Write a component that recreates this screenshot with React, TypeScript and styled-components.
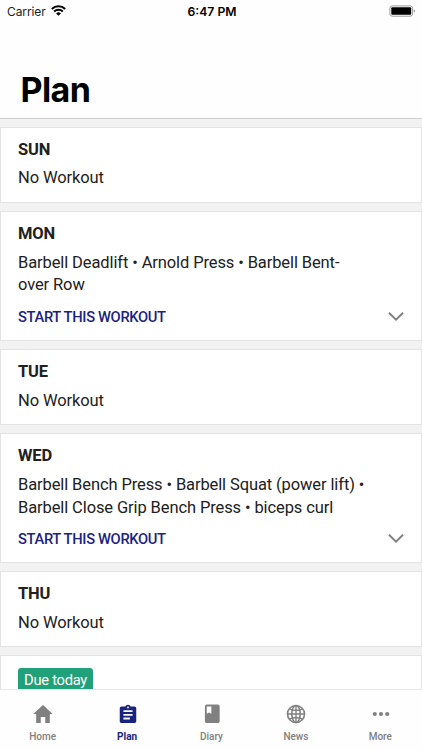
import React from "react";
import styled, { createGlobalStyle, css } from "styled-components";

const GlobalStyle = createGlobalStyle`
  * { box-sizing: border-box; }
  body { margin: 0; background: #fff; overflow: hidden; }
`;

const Screen = styled.div`
  width: 422px;
  height: 750px;
  display: flex;
  flex-direction: column;
  background: #fefefe;
  font-family: Roboto, "Liberation Sans", sans-serif;
  color: #212121;
  overflow: hidden;
`;

const Header = styled.header`
  flex: none;
  height: 119px;
  border-bottom: 1px solid #cfcfcf;
  font-family: Inter, "Liberation Sans", sans-serif;
  color: #000;
`;

const StatusBar = styled.div`
  height: 22px;
  display: grid;
  grid-template-columns: 1fr auto 1fr;
  align-items: center;
  padding: 0 6px 0 7px;
  font-size: 12px;
`;

const Carrier = styled.div`
  display: flex;
  align-items: center;
  gap: 5px;
  color: #222;
  letter-spacing: -0.1px;

  svg {
    margin-top: -2px;
  }
`;

const Clock = styled.div`
  font-weight: 600;
  font-size: 12.2px;
  padding-left: 1px;
`;

const Power = styled.div`
  display: flex;
  justify-content: flex-end;
  margin-top: -1px;
`;

const Title = styled.h1`
  margin: 47px 0 0 20.5px;
  font-size: 34px;
  line-height: 42px;
  font-weight: 700;
  letter-spacing: -0.6px;
`;

const Days = styled.main`
  flex: 1;
  min-height: 0;
  overflow: hidden;
  background: #f2f2f2;
  padding-top: 7.5px;
  display: flex;
  flex-direction: column;
  gap: 8px;
`;

const Card = styled.section<{ $workout?: boolean }>`
  flex: none;
  height: ${(p) => (p.$workout ? "129.9px" : "76.2px")};
  padding: 12.6px 17px 0 17px;
  background: #fff;
  border: 1px solid #e3e3e3;
`;

const DayName = styled.h2`
  margin: 0;
  font-size: 16.5px;
  line-height: 20px;
  font-weight: 700;
  letter-spacing: -0.15px;
`;

const Exercises = styled.p`
  margin: 7.4px 36px 0 0;
  font-size: 16.5px;
  line-height: 22.8px;
  letter-spacing: -0.11px;
  white-space: pre-line;
`;

const CardFooter = styled.div`
  display: flex;
  align-items: center;
  justify-content: space-between;
  margin-top: 8.6px;
`;

const StartButton = styled.button`
  border: 0;
  padding: 0;
  background: none;
  font: 500 14.7px/23px Roboto, sans-serif;
  letter-spacing: -0.33px;
  color: #1a237e;
`;

const Badge = styled.span`
  display: inline-block;
  height: 28px;
  padding: 0 6px;
  border-radius: 3px;
  background: #21a179;
  color: #fff;
  font-size: 14.7px;
  line-height: 24px;
  letter-spacing: -0.25px;
`;

const TabBar = styled.nav`
  flex: none;
  height: 61px;
  border-top: 1px solid #e6e6e6;
  display: grid;
  grid-template-columns: repeat(5, 1fr);
`;

const Tab = styled.a<{ $active?: boolean }>`
  display: flex;
  flex-direction: column;
  align-items: center;
  padding-top: 12px;
  padding-left: 1px;
  color: #808080;
  font-size: 10px;
  line-height: 14px;
  font-weight: 500;
  ${(p) =>
    p.$active &&
    css`
      color: #1a237e;
      font-weight: 700;
    `}
  svg {
    margin-bottom: 4px;
    margin-left: 1px;
  }
`;

const WifiIcon = () => (
  <svg width="15" height="11" viewBox="0 0 15 11" fill="none" stroke="#000" strokeWidth="2">
    <path d="M.8 4A9.5 9.5 0 0 1 14.2 4" />
    <path d="M3.2 6.5A6.2 6.2 0 0 1 11.8 6.5" />
    <path d="M7.5 10.7 5.1 8.4a3.5 3.5 0 0 1 4.8 0z" fill="#000" stroke="none" />
  </svg>
);

const BatteryIcon = () => (
  <svg width="27" height="12" viewBox="0 0 27 12">
    <rect x=".9" y=".9" width="22.7" height="10.3" rx="2.4" fill="#fff" stroke="#999" />
    <rect x="2.3" y="2.3" width="19.9" height="7.5" rx="1" />
    <path d="M24.9 4.2c1.6.6 1.6 3 0 3.6z" fill="#999" />
  </svg>
);

const Chevron = () => (
  <svg width="16" height="10" viewBox="0 0 16 10" fill="none" stroke="#808080" strokeWidth="1.9">
    <path d="M1 .8 8 7.6l7-6.8" />
  </svg>
);

const HomeIcon = () => (
  <svg width="24" height="24" viewBox="0 0 512 512" fill="currentColor">
    <path d="M208 448V320h96v128h97.6V256H464L256 64 48 256h62.4v192z" />
  </svg>
);

const PlanIcon = () => (
  <svg width="24" height="24" viewBox="-1.1 -2 26.2 26.2" fill="currentColor">
    <path d="M19 3h-4.18C14.4 1.84 13.3 1 12 1s-2.4.84-2.82 2H5c-1.1 0-2 .9-2 2v14c0 1.1.9 2 2 2h14c1.1 0 2-.9 2-2V5c0-1.1-.9-2-2-2zm-7 0c.55 0 1 .45 1 1s-.45 1-1 1-1-.45-1-1 .45-1 1-1zm2 14H7v-2h7v2zm3-4H7v-2h10v2zm0-4H7V7h10v2z" />
  </svg>
);

const DiaryIcon = () => (
  <svg width="24" height="24" viewBox="-1.3 -.8 26 26" fill="currentColor">
    <path d="M18 2H6c-1.1 0-2 .9-2 2v16c0 1.1.9 2 2 2h12c1.1 0 2-.9 2-2V4c0-1.1-.9-2-2-2zM6 4h5v8l-2.5-1.5L6 12V4z" />
  </svg>
);

const NewsIcon = () => (
  <svg width="24" height="24" viewBox="0 0 24 24" fill="none" stroke="currentColor" strokeWidth="1.6">
    <circle cx="12" cy="12" r="8.5" />
    <ellipse cx="12" cy="12" rx="4.2" ry="8.5" />
    <path d="M12 3.5v17M3.5 12h17M5.5 6.9c3.7 2.2 9.3 2.2 13 0M5.5 17.1c3.7-2.2 9.3-2.2 13 0" strokeWidth="1.4" />
  </svg>
);

const MoreIcon = () => (
  <svg width="24" height="24" viewBox="0 0 24 24" fill="currentColor">
    <circle cx="5.8" cy="12" r="2.1" />
    <circle cx="12" cy="12" r="2.1" />
    <circle cx="18.2" cy="12" r="2.1" />
  </svg>
);

const days = [
  { name: "SUN" },
  { name: "MON", exercises: "Barbell Deadlift • Arnold Press • Barbell Bent-\nover Row" },
  { name: "TUE" },
  { name: "WED", exercises: "Barbell Bench Press • Barbell Squat (power lift) •\nBarbell Close Grip Bench Press • biceps curl" },
  { name: "THU" },
];

const tabs = [
  { label: "Home", Icon: HomeIcon },
  { label: "Plan", Icon: PlanIcon, active: true },
  { label: "Diary", Icon: DiaryIcon },
  { label: "News", Icon: NewsIcon },
  { label: "More", Icon: MoreIcon },
];

export default function App() {
  return (
    <Screen>
      <GlobalStyle />
      <Header>
        <StatusBar>
          <Carrier>
            Carrier <WifiIcon />
          </Carrier>
          <Clock>6:47 PM</Clock>
          <Power>
            <BatteryIcon />
          </Power>
        </StatusBar>
        <Title>Plan</Title>
      </Header>
      <Days>
        {days.map((day) => (
          <Card key={day.name} $workout={!!day.exercises}>
            <DayName>{day.name}</DayName>
            <Exercises>{day.exercises ?? "No Workout"}</Exercises>
            {day.exercises && (
              <CardFooter>
                <StartButton>START THIS WORKOUT</StartButton>
                <Chevron />
              </CardFooter>
            )}
          </Card>
        ))}
        <Card>
          <Badge>Due today</Badge>
        </Card>
      </Days>
      <TabBar>
        {tabs.map(({ label, Icon, active }) => (
          <Tab key={label} $active={active}>
            <Icon />
            {label}
          </Tab>
        ))}
      </TabBar>
    </Screen>
  );
}
